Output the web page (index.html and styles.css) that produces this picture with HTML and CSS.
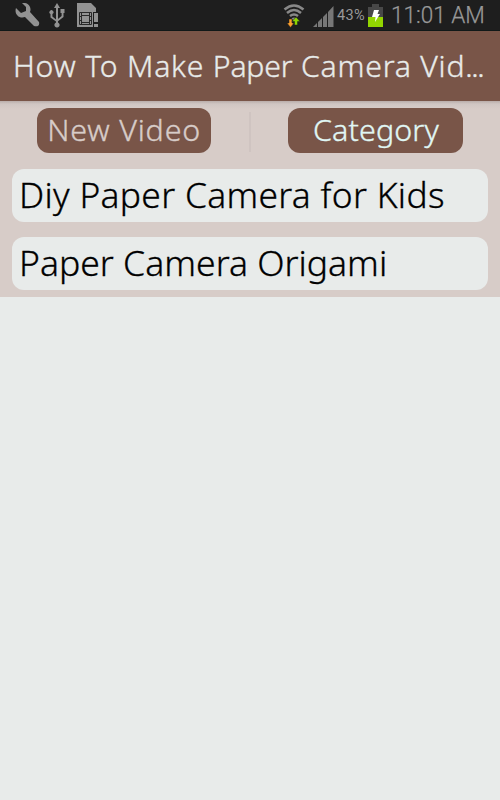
FILE: index.html
```
<!DOCTYPE html>
<html lang="en">
<head>
<meta charset="utf-8">
<title>How To Make Paper Camera Video</title>
<link rel="stylesheet" href="styles.css">
</head>
<body>
<div class="status">
  <svg class="ic wrench" width="25" height="25" viewBox="0 0 25 25"><path d="M1 5 L6 10 L11 8 L11 4 L7 0 C13 -1 17 4 15 9 L24 19 C25 23 22 24 19 23 L10 14 C4 16 -1 11 1 5Z"/></svg>
  <svg class="ic usb" width="16" height="25" viewBox="0 0 16 25"><path d="M8 0 L11 5 H9 V16 L12.600 13 V10 H11.500 V6 H15.500 V10 H14.500 V13.900 L9 18.300 V19.500 A2.600 2.600 0 1 1 7 19.500 V18.500 L1.500 14.500 V11 A2 2 0 1 1 3.400 11 V13.600 L7 16.500 V5 H5Z"/></svg>
  <svg class="ic sim" width="22" height="25" viewBox="0 0 22 25"><path d="M0 0H14L19 5V9H16V24H0Z"/><path d="M17 10H21V19H17ZM17 21H21V24H17Z"/><path class="cut" d="M2.500 9.500H14.500V21.500H2.500ZM4.500 9.500V21.500M12.500 9.500V21.500M2.500 13.500H4.500M2.500 17.500H4.500M12.500 13.500H14.500M12.500 17.500H14.500M4.500 12.500H12.500M4.500 19.500H12.500"/></svg>
  <span class="grow"></span>
  <svg class="wifi" width="22" height="24" viewBox="0 0 22 24"><g class="arcs"><path d="M1.500 5.500Q11-2.500 20.500 5.500M4 9Q11 3 18 9M7 12Q11 9 15 12"/></g><path class="gray" d="M8.500 14.500Q11 12.500 13.500 14.500L11 17Z"/><path class="down" d="M6 15H9V19H11L7.500 23.500L4 19H6Z"/><path class="up" d="M11.500 21H14.500V17.500H17L13 13L9 17.500H11.500Z"/></svg>
  <svg class="signal" width="21" height="21" viewBox="0 0 21 21"><path d="M0 21L4 17V21ZM5 16L9 12V21H5ZM10 11L14 7V21H10ZM15 6L20.500 0V21H15Z"/></svg>
  <span class="pct">43%</span>
  <svg class="batt" width="15" height="23" viewBox="0 0 15 23"><path class="empty" d="M4 0H11V3H15V13H0V3H4Z"/><path class="full" d="M0 13H15V23H0Z"/><path class="bolt" d="M6 6H11L9.500 10H12L7 18L7.500 13H4Z"/></svg>
  <time class="clock">11:01 AM</time>
</div>
<header class="title"><h1>How To Make <span class="tight">Paper</span> Camera Vid<span class="dots">...</span></h1></header>
<main class="panel">
  <nav class="tabs">
    <div class="tab"><a class="btn new"><span>New Video</span></a></div>
    <div class="tab"><a class="btn cat"><span>Category</span></a></div>
  </nav>
  <ul class="list">
    <li class="row diy"><span>Diy Paper Camera for Kids</span></li>
    <li class="row ori"><span>Paper Camera Origami</span></li>
  </ul>
</main>
</body>
</html>
```
FILE: styles.css
```
* { box-sizing: border-box; }
body { margin: 0; height: 800px; overflow: hidden; background: #e8ebea; font-family: "Noto Sans", sans-serif; font-weight: 300; }
.status { height: 31px; display: flex; align-items: flex-start; padding: 3px 16px 0 15px; background: #1e1e1e; border-bottom: 1px solid #101818; color: #999; font-family: Roboto, sans-serif; }
.status svg { flex: none; }
.ic { fill: #929292; }
.usb { margin-left: 9px; }
.sim { margin-left: 12px; }
.cut { fill: none; stroke: #292929; stroke-width: 1; }
.grow { flex: 1; }
.wifi { margin-right: 8px; margin-top: 1px; }
.arcs { fill: none; stroke: #888; stroke-width: 2.5; }
.gray { fill: #888; }
.down { fill: #ffa02c; stroke: #1e1e1e; stroke-width: .5; }
.up { fill: #8ed500; stroke: #1e1e1e; stroke-width: .5; }
.signal { fill: #777; margin: 3px 3px 0 0; }
.pct { width: 31px; font-size: 14.5px; line-height: 26px; font-weight: 400; letter-spacing: .3px; white-space: nowrap; }
.batt { margin: 1px 8px 0 0; }
.empty { fill: #484848; }
.full { fill: #93d500; }
.bolt { fill: #fff; }
.clock { width: 93px; font-size: 23px; line-height: 26px; font-weight: 300; -webkit-text-stroke: .25px; white-space: nowrap; transform: scaleX(.98); transform-origin: left; }
.title { height: 70px; padding: 0 0 0 13px; background: #795548; color: #e8ebea; }
h1 { display: inline-block; margin: 0; font-size: 29px; font-weight: 300; line-height: 70px; letter-spacing: .75px; white-space: nowrap; transform: scaleX(1.04); transform-origin: left; -webkit-text-stroke: .35px; }
.tight { letter-spacing: -.2px; }
.dots { letter-spacing: -1.3px; }
.panel { height: 196px; background: linear-gradient(#b9adaa 0, #d0c6c3 3px, #d7ccc8 8px); }
.tabs { display: grid; grid-template-columns: 250px 250px; height: 61px; padding-top: 7px; }
.tab { height: 45px; padding-left: 37px; position: relative; }
.tab + .tab { padding-left: 38px; }
.tab + .tab::before { content: ""; position: absolute; left: -1px; top: 4px; height: 40px; width: 2px; background: #cfc4c1; }
.btn { display: flex; justify-content: center; width: 174px; height: 45px; border-radius: 12px; background: #795548; font-size: 29px; line-height: 44px; white-space: nowrap; -webkit-text-stroke: .35px; }
.btn span { transform: scaleX(1.05); }
.new { color: #d7ccc8; letter-spacing: .75px; }
.cat { width: 175px; color: #e0f7f4; letter-spacing: .1px; }
.list { list-style: none; margin: 0; padding: 7px 12px 0; display: grid; gap: 15px; }
.row { height: 53px; padding-left: 7px; border-radius: 12px; background: #e8ebea; color: #000; font-size: 34px; line-height: 52px; white-space: nowrap; -webkit-text-stroke: .3px; }
.row span { display: inline-block; transform: scaleX(1.04); transform-origin: left; }
.diy { letter-spacing: .3px; }
.row.ori span { transform: scaleX(1.045); }
```
